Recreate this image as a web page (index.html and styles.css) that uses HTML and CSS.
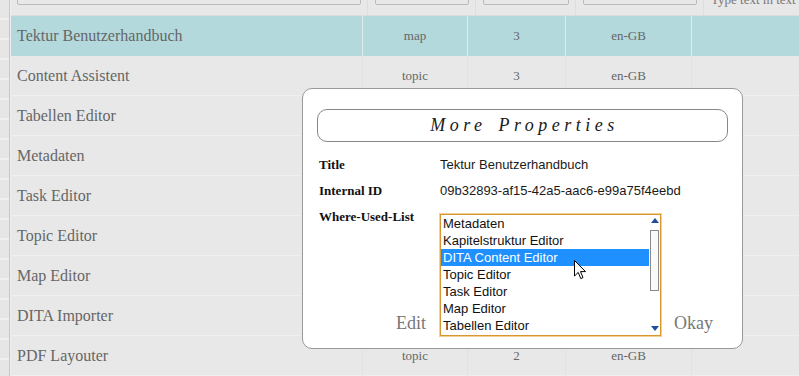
FILE: index.html
```html
<!DOCTYPE html>
<html lang="en">
<head>
    <meta charset="UTF-8">
    <meta name="viewport" content="width=device-width, initial-scale=1.0">
    <title>Tektur - Maps</title>
    <link rel="stylesheet" href="styles.css">
</head>
<body>
    <div class="page">
        <div class="side-strip"></div>

        <div class="table-area">
            <!-- filter row -->
            <div class="filter-row">
                <div class="filter-cell"><div class="filter-box"></div></div>
                <div class="filter-cell"><div class="filter-box"></div></div>
                <div class="filter-cell"><div class="filter-box"></div></div>
                <div class="filter-cell"><div class="filter-box"></div></div>
                <div class="filter-cell hint">Type text in text field</div>
            </div>

            <!-- map list -->
            <div class="row selected">
                <div class="cell name">Tektur Benutzerhandbuch</div>
                <div class="cell">map</div>
                <div class="cell">3</div>
                <div class="cell">en-GB</div>
                <div class="cell"></div>
            </div>
            <div class="row">
                <div class="cell name">Content Assistent</div>
                <div class="cell">topic</div>
                <div class="cell">3</div>
                <div class="cell">en-GB</div>
                <div class="cell"></div>
            </div>
            <!-- rows below are covered by the dialog -->
            <div class="row">
                <div class="cell name">Tabellen Editor</div>
                <div class="cell"></div>
                <div class="cell"></div>
                <div class="cell"></div>
                <div class="cell"></div>
            </div>
            <div class="row">
                <div class="cell name">Metadaten</div>
                <div class="cell"></div>
                <div class="cell"></div>
                <div class="cell"></div>
                <div class="cell"></div>
            </div>
            <div class="row">
                <div class="cell name">Task Editor</div>
                <div class="cell"></div>
                <div class="cell"></div>
                <div class="cell"></div>
                <div class="cell"></div>
            </div>
            <div class="row">
                <div class="cell name">Topic Editor</div>
                <div class="cell"></div>
                <div class="cell"></div>
                <div class="cell"></div>
                <div class="cell"></div>
            </div>
            <div class="row">
                <div class="cell name">Map Editor</div>
                <div class="cell"></div>
                <div class="cell"></div>
                <div class="cell"></div>
                <div class="cell"></div>
            </div>
            <div class="row">
                <div class="cell name">DITA Importer</div>
                <div class="cell"></div>
                <div class="cell"></div>
                <div class="cell"></div>
                <div class="cell"></div>
            </div>
            <div class="row">
                <div class="cell name">PDF Layouter</div>
                <div class="cell">topic</div>
                <div class="cell">2</div>
                <div class="cell">en-GB</div>
                <div class="cell"></div>
            </div>
        </div>
    </div>

    <!-- More Properties dialog -->
    <div class="dialog">
        <div class="dialog-title">More Properties</div>

        <div class="props">
            <div class="prop-label">Title</div>
            <div class="prop-value">Tektur Benutzerhandbuch</div>

            <div class="prop-label">Internal ID</div>
            <div class="prop-value">09b32893-af15-42a5-aac6-e99a75f4eebd</div>

            <div class="prop-label">Where-Used-List</div>
            <div class="prop-value where">
                <div class="listbox">
                    <div class="list-items">
                        <div class="item">Metadaten</div>
                        <div class="item">Kapitelstruktur Editor</div>
                        <div class="item active">DITA Content Editor</div>
                        <div class="item">Topic Editor</div>
                        <div class="item">Task Editor</div>
                        <div class="item">Map Editor</div>
                        <div class="item">Tabellen Editor</div>
                    </div>
                    <div class="scrollbar">
                        <div class="arrow up"></div>
                        <div class="thumb"></div>
                        <div class="arrow down"></div>
                    </div>
                </div>
            </div>
        </div>

        <div class="dialog-buttons">
            <span class="btn">Edit</span>
            <span class="btn">Okay</span>
        </div>
    </div>

    <svg class="cursor" width="13" height="20" viewBox="0 0 13 20">
        <path d="M0.5 0.5 L0.5 16 L4.2 12.4 L6.8 18.6 L9 17.6 L6.5 11.6 L11.5 11.6 Z" fill="#fff" stroke="#000" stroke-width="1" stroke-linejoin="round"/>
    </svg>
</body>
</html>
```

FILE: styles.css
```css
body {
    margin: 0;
    background: #e8e8e8;
    font-family: "Liberation Serif", "Times New Roman", serif;
    color: #666;
    overflow: hidden;
    height: 376px;
}
.page {
    display: flex;
    height: 376px;
}
.side-strip {
    flex-shrink: 0;
    width: 9px;
    border-right: 1px solid #c6c6c6;
    background: repeating-linear-gradient(to bottom, #e6e6e6 0, #e6e6e6 18px, #f0f0f0 18px, #f0f0f0 20px);
}
.table-area {
    flex: 1;
    min-width: 0;
    overflow: hidden;
    border-left: 1px solid #efefef;
}
.filter-row {
    display: grid;
    grid-template-columns: 357px 108px 100px 128px minmax(0, 1fr);
    grid-template-rows: 15px;
    height: 15px;
    border-bottom: 1px solid #dcdcdc;
    overflow: hidden;
}
.filter-cell {
    display: flex;
    align-items: flex-end;
    padding: 0 6px 10px 7px;
    border-right: 1px solid #dedede;
}
.filter-cell:first-child {
    padding-left: 6px;
    padding-right: 6px;
}
.filter-box {
    flex: 1;
    height: 24px;
    flex-shrink: 0;
    border: 1px solid #bbb;
    border-radius: 2px;
}
.filter-cell.hint {
    border-right: none;
    padding-bottom: 8px;
    font-size: 13px;
    line-height: 14px;
    white-space: nowrap;
    color: #777;
}
.row {
    display: grid;
    grid-template-columns: 352px 105px 98px 126px 1fr;
    height: 40px;
    border-bottom: 1px solid #efefef;
    box-sizing: border-box;
}
.row.selected {
    background: #b3d9dd;
    border-bottom-color: #b3d9dd;
}
.cell {
    border-right: 1px solid #e2e2e2;
    text-align: center;
    font-size: 13px;
    line-height: 40px;
}
.row.selected .cell {
    border-right-color: #e4ebec;
}
.cell:last-child {
    border-right: none;
}
.cell.name {
    text-align: left;
    padding-left: 6px;
    font-size: 16px;
}

/* dialog */
.dialog {
    position: absolute;
    left: 302px;
    top: 88px;
    width: 441px;
    height: 261px;
    box-sizing: border-box;
    background: #fff;
    border: 1px solid #999;
    border-radius: 10px;
    padding: 20px 14px 0 14px;
    display: flex;
    flex-direction: column;
    color: #111;
}
.dialog-title {
    height: 33px;
    box-sizing: border-box;
    border: 1px solid #888;
    border-radius: 10px;
    text-align: center;
    font-size: 18px;
    font-style: italic;
    letter-spacing: 4.5px;
    word-spacing: 3px;
    line-height: 31px;
    padding-left: 4px;
    color: #1a1a1a;
}
.props {
    display: grid;
    grid-template-columns: 121px 1fr;
    row-gap: 10px;
    margin: 15px 0 0 2px;
    font-size: 13px;
    line-height: 16px;
}
.prop-label {
    font-weight: bold;
    color: #111;
}
.prop-value {
    font-family: "Liberation Sans", Arial, sans-serif;
    color: #1a1a1a;
}
.prop-value.where {
    position: relative;
}
.listbox {
    position: absolute;
    left: 0;
    top: 5px;
    width: 221px;
    height: 122px;
    box-sizing: border-box;
    border: 1px solid #d9972f;
    box-shadow: 0 0 0 1px #f3cf94;
    display: flex;
    background: #fff;
}
.list-items {
    flex: 1;
}
.item {
    height: 17px;
    line-height: 17px;
    padding-left: 2px;
    white-space: nowrap;
    color: #111;
}
.item.active {
    background: #1e90ff;
    color: #fff;
}
.scrollbar {
    width: 11px;
    display: flex;
    flex-direction: column;
    align-items: center;
}
.arrow {
    width: 0;
    height: 0;
    border-left: 4px solid transparent;
    border-right: 4px solid transparent;
}
.arrow.up {
    border-bottom: 5px solid #1d4f9c;
    margin-top: 3px;
}
.arrow.down {
    border-top: 5px solid #1d4f9c;
    margin-top: auto;
    margin-bottom: 4px;
}
.thumb {
    width: 9px;
    height: 61px;
    box-sizing: border-box;
    border: 1px solid #8a8a8a;
    background: #fafafa;
    margin-top: 7px;
    margin-right: 1px;
}
.dialog-buttons {
    margin-top: auto;
    display: flex;
    justify-content: space-between;
    padding: 0 15px 14px 79px;
    font-size: 18px;
    line-height: 22px;
    color: #777;
}
.cursor {
    position: absolute;
    left: 574px;
    top: 260px;
}
```
